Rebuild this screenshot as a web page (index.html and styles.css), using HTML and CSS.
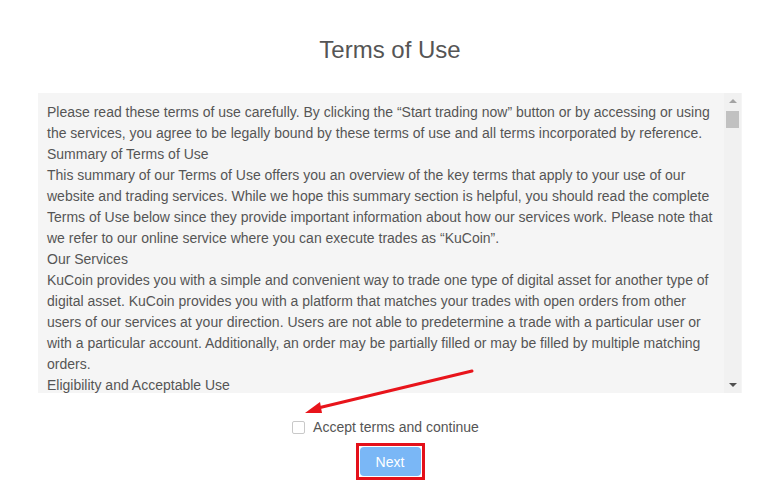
FILE: index.html
```html
<!DOCTYPE html>
<html lang="en">
<head>
    <meta charset="UTF-8">
    <meta name="viewport" content="width=device-width, initial-scale=1.0">
    <title>Terms of Use</title>
    <link rel="stylesheet" href="styles.css">
</head>
<body>
    <div class="page">
        <h1 class="title">Terms of Use</h1>

        <div class="terms-box">
            <div class="terms-text">
                <p>Please read these terms of use carefully. By clicking the “Start trading now” button or by accessing or using the services, you agree to be legally bound by these terms of use and all terms incorporated by reference.</p>
                <p>Summary of Terms of Use</p>
                <p>This summary of our Terms of Use offers you an overview of the key terms that apply to your use of our website and trading services. While we hope this summary section is helpful, you should read the complete Terms of Use below since they provide important information about how our services work. Please note that we refer to our online service where you can execute trades as “KuCoin”.</p>
                <p>Our Services</p>
                <p>KuCoin provides you with a simple and convenient way to trade one type of digital asset for another type of digital asset. KuCoin provides you with a platform that matches your trades with open orders from other users of our services at your direction. Users are not able to predetermine a trade with a particular user or with a particular account. Additionally, an order may be partially filled or may be filled by multiple matching orders.</p>
                <p>Eligibility and Acceptable Use</p>
                <p>You must be at least 18 years old to use our services. You agree to use our services only for lawful purposes.</p>
            </div>
            <div class="scrollbar">
                <span class="arrow arrow-up"></span>
                <span class="thumb"></span>
                <span class="track"></span>
                <span class="arrow arrow-down"></span>
            </div>
        </div>

        <label class="accept">
            <input type="checkbox" class="accept-box">
            <span>Accept terms and continue</span>
        </label>

        <div class="actions">
            <span class="highlight">
                <button class="next-btn">Next</button>
            </span>
        </div>
    </div>

    <!-- annotation arrow -->
    <svg class="pointer" width="762" height="499" viewBox="0 0 762 499">
        <line x1="472" y1="371" x2="318" y2="408" stroke="#e8141b" stroke-width="3" stroke-linecap="round"/>
        <polygon points="305,413 320,402 322,413" fill="#e8141b"/>
    </svg>
</body>
</html>
```

FILE: styles.css
```css
body {
    margin: 0;
    font-family: "Liberation Sans", Arial, sans-serif;
    background: #fff;
    color: #555;
    position: relative;
}

.page {
    width: 704px;
    margin-left: 38px;
    display: flex;
    flex-direction: column;
    align-items: center;
}

.title {
    margin: 36px 0 0;
    font-size: 24px;
    font-weight: normal;
    line-height: 28px;
    color: #555;
}

.terms-box {
    align-self: stretch;
    margin-top: 29px;
    height: 300px;
    background: #f5f5f5;
    display: flex;
}

.terms-text {
    flex: 1;
    overflow: hidden;
    padding: 9px 8px 0 9px;
    font-size: 14px;
    line-height: 21px;
    color: #555;
}

.terms-text p {
    margin: 0;
}

.scrollbar {
    width: 17px;
    margin-right: 1px;
    background: #f1f1f1;
    display: flex;
    flex-direction: column;
    align-items: center;
}

.arrow {
    width: 0;
    height: 0;
    border-left: 4px solid transparent;
    border-right: 4px solid transparent;
}

.arrow-up {
    margin-top: 6px;
    border-bottom: 4px solid #a3a3a3;
}

.arrow-down {
    margin-bottom: 6px;
    border-top: 4px solid #505050;
}

.thumb {
    width: 13px;
    height: 17px;
    margin-top: 8px;
    background: #c1c1c1;
}

.track {
    flex: 1;
}

.accept {
    margin-top: 26px;
    display: flex;
    align-items: center;
    gap: 8px;
    font-size: 14px;
    line-height: 16px;
    color: #555;
    margin-right: 9px;
}

.accept-box {
    appearance: none;
    width: 13px;
    height: 13px;
    margin: 0;
    border: 1px solid #c9c9c9;
    border-radius: 2px;
    background: #fff;
}

.actions {
    margin-top: 8px;
}

.highlight {
    display: flex;
    padding: 1px;
    border: 3px solid #e4101a;
}

.next-btn {
    width: 61px;
    height: 29px;
    border: none;
    border-radius: 4px;
    background: #7ab7f6;
    color: #fff;
    font-family: "Liberation Sans", Arial, sans-serif;
    font-size: 14px;
}

.pointer {
    position: absolute;
    left: 0;
    top: 0;
    pointer-events: none;
}
```
